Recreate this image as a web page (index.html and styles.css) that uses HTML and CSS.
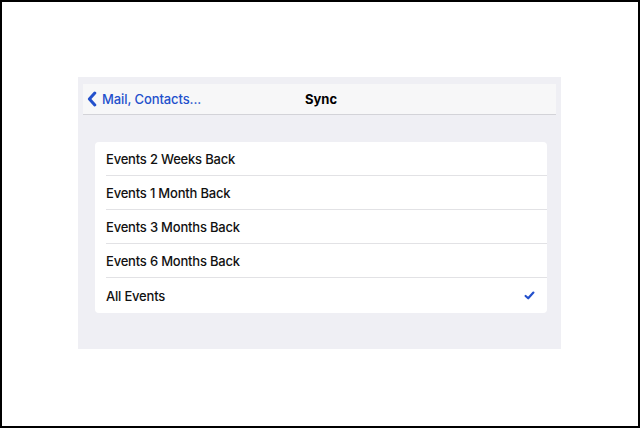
FILE: index.html
```html
<!DOCTYPE html>
<html>
<head>
<meta charset="utf-8">
<link rel="stylesheet" href="styles.css">
</head>
<body>
<div class="frame">
  <div class="panel">
    <div class="nav">
      <div class="back">
        <svg class="chev" width="10" height="16" viewBox="0 0 10 16"><path d="M7.8 2 L2.4 8 L7.8 14" fill="none" stroke="#2350cc" stroke-width="3" stroke-linecap="round" stroke-linejoin="round"/></svg>
        <span>Mail, Contacts...</span>
      </div>
      <div class="title">Sync</div>
    </div>
    <div class="card">
      <div class="row"><span>Events 2 Weeks Back</span></div>
      <div class="row"><span>Events 1 Month Back</span></div>
      <div class="row"><span>Events 3 Months Back</span></div>
      <div class="row"><span>Events 6 Months Back</span></div>
      <div class="row last"><span>All Events</span>
        <svg class="check" width="11" height="9" viewBox="0 0 11 9"><path d="M1.6 5 L4.2 7.3 L9.4 1.6" fill="none" stroke="#2350cc" stroke-width="2.2" stroke-linecap="round" stroke-linejoin="round"/></svg>
      </div>
    </div>
  </div>
</div>
</body>
</html>
```
FILE: styles.css
```css
html, body {
  margin: 0;
  padding: 0;
  background: #fff;
}
.frame {
  width: 640px;
  height: 428px;
  box-sizing: border-box;
  border: 2px solid #000;
  padding: 75px 0 0 76px;
  font-family: Inter, "Liberation Sans", sans-serif;
}
.panel {
  width: 483px;
  height: 272px;
  box-sizing: border-box;
  background: #efeff4;
  padding: 7px 5px 0 5px;
}
.nav {
  position: relative;
  height: 30px;
  background: #f7f7f8;
  border-bottom: 1px solid #d3d3d8;
  display: flex;
  align-items: center;
  padding-left: 4px;
}
.back {
  display: flex;
  align-items: center;
  gap: 5px;
  color: #2350cc;
  font-size: 13px;
  font-weight: 500;
  letter-spacing: -0.1px;
}
.chev {
  display: block;
}
.title {
  position: absolute;
  left: 222px;
  top: 0;
  height: 30px;
  line-height: 30px;
  font-size: 13px;
  font-weight: 700;
  color: #000;
}
.card {
  margin: 27px 9px 0 12px;
  background: #fff;
  border-radius: 4px;
  padding-left: 11px;
}
.row {
  height: 34px;
  box-sizing: border-box;
  display: flex;
  align-items: center;
  justify-content: space-between;
  border-bottom: 1px solid #e2e2e5;
  padding-right: 12px;
  font-size: 13px;
  font-weight: 500;
  letter-spacing: -0.2px;
  color: #111;
}
.row.last {
  border-bottom: none;
  height: 35px;
}
.check {
  display: block;
}
```
